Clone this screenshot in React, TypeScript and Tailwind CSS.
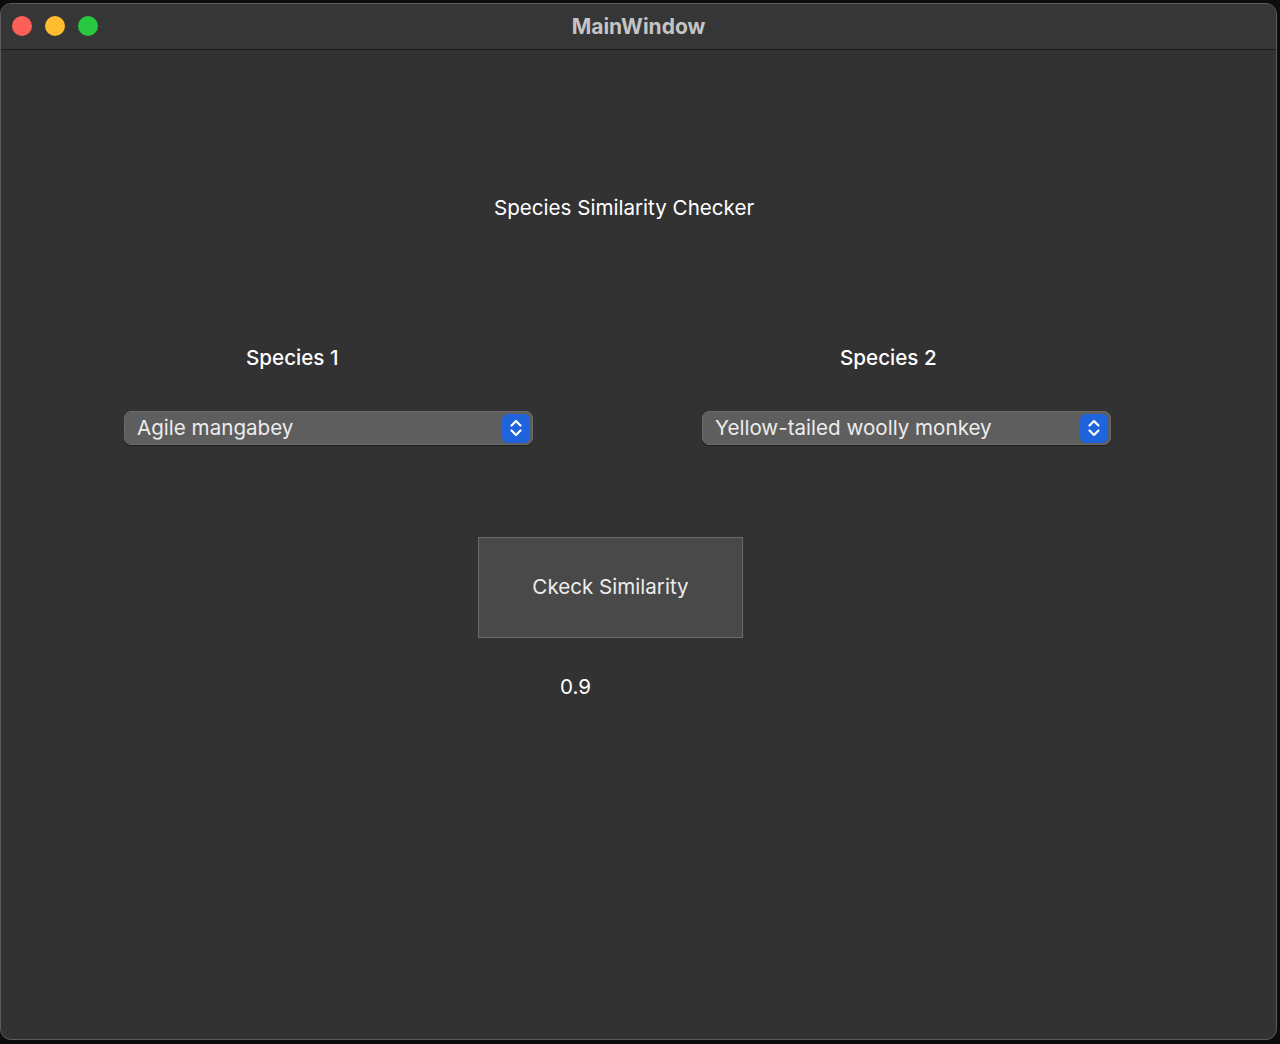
import React from "react";

const SPECIES_1 = "Agile mangabey";
const SPECIES_2 = "Yellow-tailed woolly monkey";

const Stepper = () => (
  <div className="flex items-center justify-center w-[28px] h-[29px] rounded-[6px] bg-[#1f64dd]">
    <svg width="16" height="22" viewBox="0 0 16 22" fill="none">
      <path d="M3.5 8.5 L8 4 L12.5 8.5" stroke="white" strokeWidth="2.2" strokeLinecap="round" strokeLinejoin="round" />
      <path d="M3.5 13.5 L8 18 L12.5 13.5" stroke="white" strokeWidth="2.2" strokeLinecap="round" strokeLinejoin="round" />
    </svg>
  </div>
);

const ComboBox = ({ value }: { value: string }) => (
  <div className="flex items-center justify-between w-[409px] h-[34px] pl-[12px] pr-[2px] rounded-[7px] bg-[#5e5e5e] border border-[#6c6c6c] shadow-[0_1px_1px_rgba(0,0,0,0.4)]">
    <span className="text-[20.6px] text-[#ececec] leading-none">{value}</span>
    <Stepper />
  </div>
);

// label offsets differ per column, as in the Qt form
const SpeciesColumn = ({ label, value, labelClass }: { label: string; value: string; labelClass: string }) => (
  <div className="flex flex-col w-[409px]">
    <p className={`text-[20.6px] font-medium text-white leading-none ${labelClass}`}>{label}</p>
    <div className="mt-[43px]">
      <ComboBox value={value} />
    </div>
  </div>
);

export default function App() {
  return (
    <div className="w-[1280px] h-[1044px] bg-[#0c0c0e] pt-[3px] font-['Inter','Liberation_Sans',sans-serif]">
      <div className="w-[1277px] h-[1037px] rounded-[11px] border border-[#5c5c5c] bg-[#323232] overflow-hidden flex flex-col">
        {/* Title bar */}
        <div className="relative flex items-center justify-center h-[46px] bg-[#363636] border-b border-[#1c1c1c]">
          <div className="absolute left-[11px] top-[12px] flex gap-[13px]">
            <span className="w-[20px] h-[20px] rounded-full bg-[#fe5f57]" />
            <span className="w-[20px] h-[20px] rounded-full bg-[#febc2e]" />
            <span className="w-[20px] h-[20px] rounded-full bg-[#28c840]" />
          </div>
          <span className="text-[21px] font-bold text-[#c4c4c4] leading-none">MainWindow</span>
        </div>

        {/* Content */}
        <div className="flex flex-col">
          <p className="mt-[148px] ml-[493px] text-[20.6px] text-white leading-none">
            Species Similarity Checker
          </p>

          <div className="mt-[129px] ml-[123px] flex gap-[169px]">
            <SpeciesColumn label="Species 1" value={SPECIES_1} labelClass="ml-[122px]" />
            <SpeciesColumn label="Species 2" value={SPECIES_2} labelClass="ml-[138px]" />
          </div>

          <button className="mt-[92px] ml-[477px] w-[265px] h-[101px] bg-[#494949] border border-[#6b6b6b] text-[20.6px] text-[#ececec]">
            Ckeck Similarity
          </button>

          <p className="mt-[39px] ml-[559px] text-[20.6px] text-white leading-none">0.9</p>
        </div>
      </div>
    </div>
  );
}
